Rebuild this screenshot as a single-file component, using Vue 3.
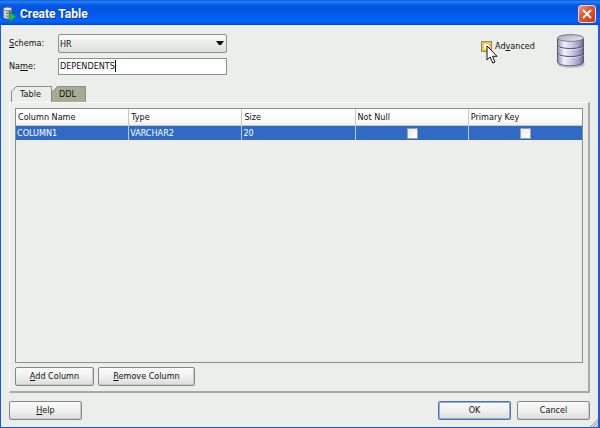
<script setup>
import { ref } from 'vue'

const schema = ref('HR')
const name = ref('DEPENDENTS')
const advanced = ref(false)
const rows = ref([
  { name: 'COLUMN1', type: 'VARCHAR2', size: '20', notNull: false, primaryKey: false },
])
const selected = ref(0)

function addColumn() {
  rows.value.push({
    name: 'COLUMN' + (rows.value.length + 1),
    type: 'VARCHAR2',
    size: '20',
    notNull: false,
    primaryKey: false,
  })
  selected.value = rows.value.length - 1
}
function removeColumn() {
  rows.value.splice(selected.value, 1)
  selected.value = Math.max(0, selected.value - 1)
}
</script>

<template>
  <div class="window">
    <header class="titlebar">
      <svg class="app-icon" width="15" height="16" viewBox="0 0 15 16" aria-hidden="true">
        <path d="M1 3v8c0 1.400 2 2.200 4.500 2.200S10 12.400 10 11V3z" fill="#b9b9cf" stroke="#45455c" stroke-width=".8" />
        <path d="M2 4.500h2.500v7.500L2 11.200z" fill="#f4f4fb" />
        <path d="M7 4.500h2.500v7L7 12z" fill="#74748e" />
        <ellipse cx="5.500" cy="3" rx="4.500" ry="1.900" fill="#e8e8ee" stroke="#55556b" stroke-width=".8" />
        <path d="M1 6.200c1 1.600 8 1.600 9 0M1 9c1 1.600 8 1.600 9 0" fill="none" stroke="#56566e" stroke-width=".7" />
        <path d="M7.500 6l6.500 4.700-6.500 4.800z" fill="#1fc32c" stroke="#0a9a1c" stroke-width=".7" />
      </svg>
      <h1>Create Table</h1>
      <button class="close" type="button" aria-label="Close">
        <svg width="10" height="10" viewBox="0 0 10 10"><path d="M1 1l8 8M9 1L1 9" stroke="#fff" stroke-width="1.800" /></svg>
      </button>
    </header>

    <main class="body">
      <section class="top">
        <div class="fields">
          <label for="schema"><u>S</u>chema:</label>
          <div class="combo">
            <select id="schema" v-model="schema"><option>HR</option></select>
            <svg class="arrow" width="8" height="5" viewBox="0 0 8 5" aria-hidden="true"><path d="M0 0h8L5 4H3z" fill="#111" /></svg>
          </div>
          <label for="name">Na<u>m</u>e:</label>
          <div class="namebox">
            <input id="name" v-model="name" type="text" />
            <span class="caret-line" aria-hidden="true"><span class="measure">{{ name }}</span></span>
          </div>
        </div>
        <div class="advanced">
          <input id="advanced" v-model="advanced" type="checkbox" class="hot" />
          <label for="advanced">Ad<u>v</u>anced</label>
          <svg class="pointer" width="12" height="20" viewBox="0 0 12 20" aria-hidden="true">
            <path d="M1 1v14l3.200-3 2.500 6 2.300-1-2.500-5.700H11z" fill="#fff" stroke="#111" stroke-width="1" />
          </svg>
        </div>
        <svg class="db" width="30" height="36" viewBox="0 0 30 36" aria-hidden="true">
          <defs>
            <linearGradient id="metal">
              <stop offset="0" stop-color="#8f8fb2" />
              <stop offset=".25" stop-color="#f1f1fc" />
              <stop offset=".5" stop-color="#d3d3ea" />
              <stop offset=".8" stop-color="#a1a1c6" />
              <stop offset="1" stop-color="#68688f" />
            </linearGradient>
            <linearGradient id="lid" x2="1" y2="1">
              <stop offset="0" stop-color="#a7a7b9" />
              <stop offset="1" stop-color="#ededf2" />
            </linearGradient>
          </defs>
          <ellipse cx="15.500" cy="30.500" rx="13.500" ry="3.500" fill="#c2c2c6" />
          <path d="M1.500 4.500v23.500c0 5 26 5 26 0V4.500z" fill="url(#metal)" stroke="#50506a" stroke-width=".9" />
          <ellipse cx="14.500" cy="4" rx="13" ry="3.400" fill="url(#lid)" stroke="#62627a" stroke-width=".8" />
          <path d="M1.500 11.500c2 4 24 4 26 0M1.500 19.500c2 4 24 4 26 0" fill="none" stroke="#4c4c6c" stroke-width="1" />
          <path d="M2 12.700c2 4 23 4 25 0M2 20.700c2 4 23 4 25 0" fill="none" stroke="#fff" stroke-opacity=".6" stroke-width=".8" />
        </svg>
      </section>

      <div class="tabs" role="tablist">
        <button class="tab active" type="button" role="tab" aria-selected="true">
          <svg class="corner" width="6" height="6" viewBox="0 0 6 6" aria-hidden="true"><path d="M0 0h6L0 6z" fill="#ebeeeb" /><path d="M0 6l6-6" stroke="#8b8d89" /></svg>
          Table
        </button>
        <button class="tab" type="button" role="tab" aria-selected="false">
          <svg class="corner" width="6" height="6" viewBox="0 0 6 6" aria-hidden="true"><path d="M0 0h6L0 6z" fill="#ebeeeb" /><path d="M0 6l6-6" stroke="#8b8d89" /></svg>
          DDL
        </button>
      </div>

      <section class="panel" role="tabpanel">
        <div class="grid">
          <table>
            <thead>
              <tr><th>Column Name</th><th>Type</th><th>Size</th><th>Not Null</th><th>Primary Key</th></tr>
            </thead>
            <tbody>
              <tr v-for="(row, i) in rows" :key="i" :class="{ selected: i === selected }" @click="selected = i">
                <td>{{ row.name }}</td>
                <td>{{ row.type }}</td>
                <td>{{ row.size }}</td>
                <td class="check"><input v-model="row.notNull" type="checkbox" aria-label="Not Null" /></td>
                <td class="check"><input v-model="row.primaryKey" type="checkbox" aria-label="Primary Key" /></td>
              </tr>
            </tbody>
          </table>
        </div>
        <div class="actions">
          <button class="btn add" type="button" @click="addColumn"><u>A</u>dd Column</button>
          <button class="btn remove" type="button" @click="removeColumn"><u>R</u>emove Column</button>
        </div>
      </section>

      <footer class="footer">
        <button class="btn" type="button"><u>H</u>elp</button>
        <span class="spacer"></span>
        <button class="btn default" type="button">OK</button>
        <button class="btn" type="button">Cancel</button>
      </footer>
      <svg class="grip" width="8" height="8" viewBox="0 0 8 8" aria-hidden="true">
        <path d="M0 8l8-8v8z" fill="#d5d6cf" /><path d="M0 8l8-8M3 8l5-5M6 8l2-2" stroke="#a5a79f" />
      </svg>
    </main>
  </div>
</template>

<style>
body { margin: 0; }
</style>

<style scoped>
* { box-sizing: border-box; }
.window {
  display: flex;
  flex-direction: column;
  min-height: 100vh;
  background: #ebeeeb;
  border: solid #1c5be0;
  border-width: 0 2px 1px 1px;
  font: 9px/14px "DejaVu Sans Condensed", "DejaVu Sans", sans-serif;
  color: #111;
}
button, input, select { font: inherit; color: inherit; margin: 0; }
u { text-underline-offset: 1px; }
.titlebar {
  display: flex;
  align-items: center;
  height: 25px;
  margin: 0 -2px 0 -1px;
  padding: 2px 4px 0 2px;
  background: linear-gradient(#0a5be0 0, #2c83f6 2px, #0a5fe8 4px, #0253df 8px, #0259ec 14px, #0265fd 21px, #0153dc 24px, #0144c4);
}
.app-icon { flex: none; }
h1 {
  flex: 1;
  margin: 0 0 0 3px;
  font: bold 12px/16px Roboto, "Liberation Sans", sans-serif;
  color: #fff;
  text-shadow: 1px 1px #0a3796;
}
.close {
  display: flex;
  align-items: center;
  justify-content: center;
  width: 18px;
  height: 18px;
  padding: 0;
  border: 1px solid #f5d9d2;
  border-radius: 3px;
  background: linear-gradient(135deg, #f09a80, #e25733 40%, #c93a12);
}
.body {
  position: relative;
  display: flex;
  flex: 1;
  flex-direction: column;
  padding: 9px 8px 7px;
}
.top { display: flex; align-items: flex-start; }
.fields {
  display: grid;
  grid-template-columns: 49px 169px;
  grid-template-rows: 19px 17px;
  row-gap: 5px;
  align-items: center;
}
.fields label, .advanced label { padding-bottom: 1px; }
.combo, .namebox { position: relative; height: 100%; }
.combo select {
  appearance: none;
  display: block;
  width: 100%;
  height: 100%;
  padding: 0 20px 0 1px;
  border: 1px solid #8e918e;
  border-radius: 2px;
  background: linear-gradient(#fafafa, #eceeec 45%, #dcdedc);
}
.arrow { position: absolute; right: 3px; top: 7px; }
.namebox input {
  display: block;
  width: 100%;
  height: 100%;
  padding: 0 1px 1px;
  border: 1px solid #8e918e;
  background: #fff;
}
.caret-line {
  position: absolute;
  left: 2px;
  top: 2px;
  height: 12px;
  border-right: 1px solid #111;
  overflow: hidden;
  pointer-events: none;
}
.measure { visibility: hidden; }
.advanced {
  position: relative;
  display: flex;
  align-items: center;
  gap: 3px;
  margin: 5px 21px 0 auto;
}
input[type="checkbox"] {
  appearance: none;
  display: block;
  width: 11px;
  height: 11px;
  border: 1px solid #a29f94;
  background: linear-gradient(135deg, #e9e9e6, #fff);
}
input[type="checkbox"]:checked { background: #355; }
.advanced .hot { border-color: #8b8878; background: #fff; box-shadow: inset 0 0 0 2px #fac53b; }
.pointer { position: absolute; left: 5px; top: 6px; }
.db { flex: none; margin-right: 4px; }
.tabs { display: flex; padding-left: 2px; margin-top: 11px; }
.tab {
  position: relative;
  width: 34px;
  height: 16px;
  padding: 0 2px 1px 0;
  border: 1px solid #8b8d89;
  border-width: 1px 1px 0 0;
  background: #a8ab94;
}
.tab.active { width: 41px; border-left-width: 1px; background: #ebeeeb; }
.corner { position: absolute; left: 0; top: -1px; }
.active .corner { left: -1px; }
.panel {
  display: flex;
  flex: 1;
  flex-direction: column;
  padding: 5px;
  border: 1px solid #fafbfa;
  border-right: 2px solid #a7aaa6;
  border-bottom: 2px solid #a7aaa6;
}
.grid { flex: 1; border: 1px solid #8b8e8a; margin-bottom: 4px; }
table { width: 100%; table-layout: fixed; border-collapse: separate; border-spacing: 0; }
th {
  height: 17px;
  padding: 0 0 0 2px;
  border-right: 1px solid #c5c8c4;
  border-bottom: 1px solid #c5c8c4;
  background: linear-gradient(#fff 50%, #eff1ef);
  font-weight: normal;
  text-align: left;
}
td { height: 14px; padding: 0 0 0 1px; line-height: 13px; border-right: 1px solid #c5c8c4; }
th:last-child, td:last-child { border-right: 0; }
.selected { background: #316ac5; color: #fff; }
.check input { margin: 0 auto; }
.actions { display: flex; gap: 4px; }
.btn {
  width: 73px;
  height: 19px;
  padding: 0 0 1px;
  border: 1px solid #858885;
  border-radius: 2px;
  background: linear-gradient(#fbfbfb, #eff0ef 50%, #dbdddb);
  box-shadow: inset -1px -1px #cacccb;
}
.btn.add { width: 79px; }
.btn.remove { width: 97px; }
.btn.default { border-color: #566f9d; box-shadow: inset 0 0 0 1px #8caee5; }
.footer { display: flex; gap: 6px; margin-top: 8px; }
.spacer { flex: 1; }
.grip { position: absolute; right: 0; bottom: 0; }
</style>
